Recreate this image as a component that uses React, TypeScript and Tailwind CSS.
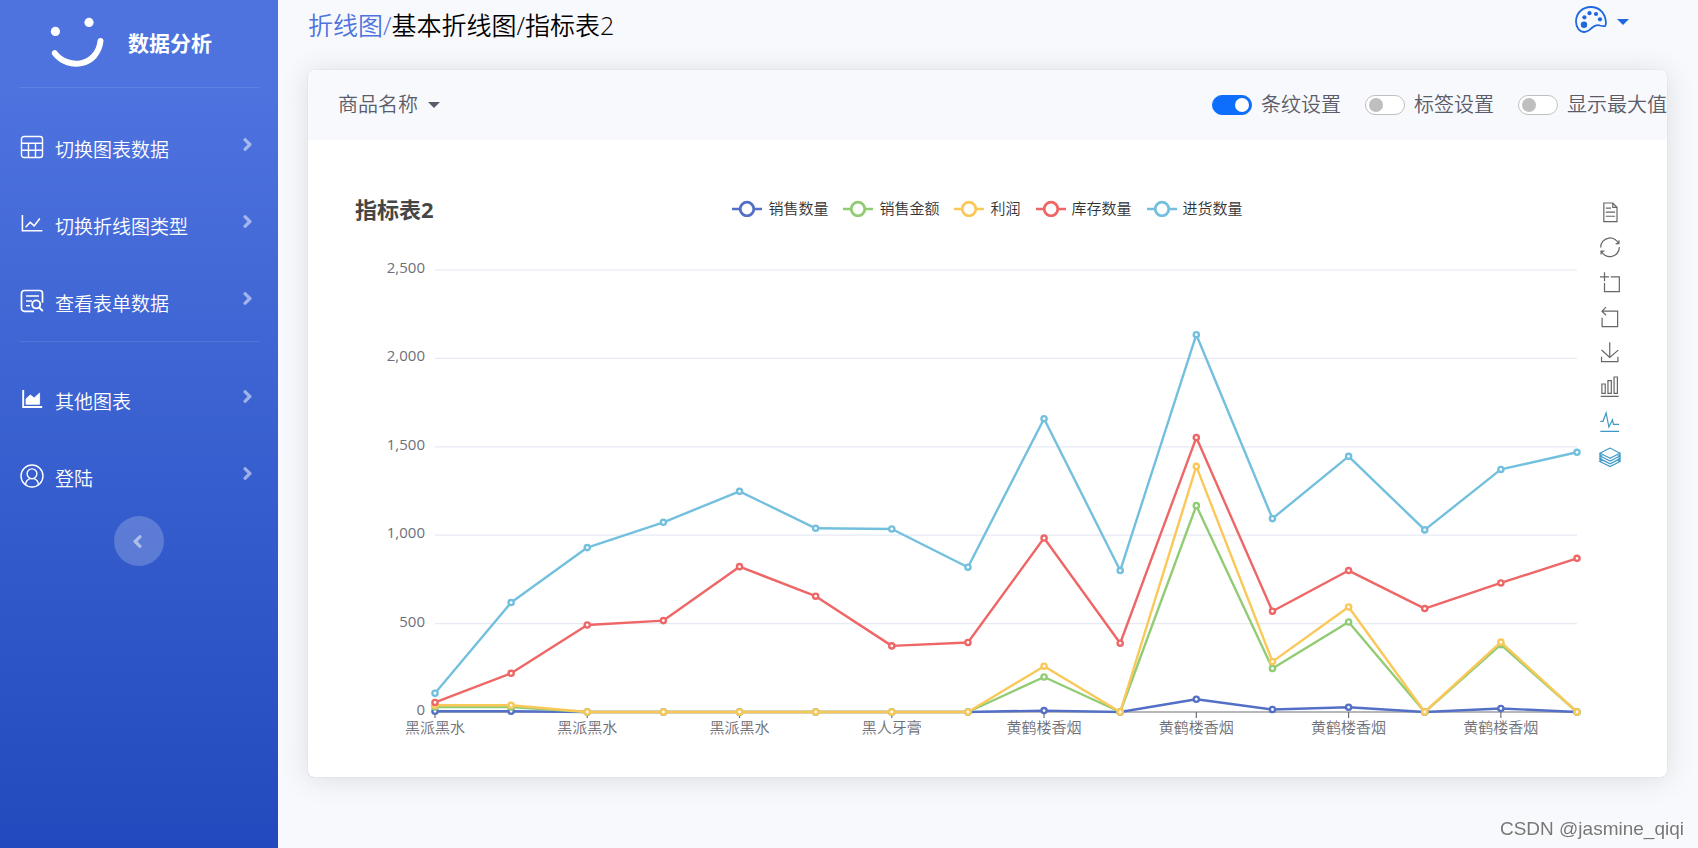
import React, { useState } from "react";
import { FaAngleLeft, FaAngleRight } from "react-icons/fa";

const series = [
  { name: "销售数量", color: "#5470c6", data: [4, 4, 0, 0, 0, 0, 0, 0, 8, 0, 72, 14, 27, 0, 20, 0] },
  { name: "销售金额", color: "#91cc75", data: [28, 28, 0, 0, 0, 0, 0, 0, 198, 0, 1167, 246, 509, 0, 381, 0] },
  { name: "利润", color: "#fac858", data: [38, 38, 0, 0, 0, 0, 0, 0, 259, 0, 1389, 285, 594, 0, 395, 0] },
  { name: "库存数量", color: "#ee6666", data: [54, 219, 492, 517, 822, 655, 374, 393, 984, 389, 1552, 570, 800, 585, 730, 869] },
  { name: "进货数量", color: "#73c0de", data: [106, 619, 930, 1073, 1248, 1039, 1035, 819, 1659, 800, 2134, 1094, 1446, 1030, 1372, 1469] },
];

const categories = ["黑派黑水", "黑派黑水", "黑派黑水", "黑人牙膏", "黄鹤楼香烟", "黄鹤楼香烟", "黄鹤楼香烟", "黄鹤楼香烟"];
const yTicks = [0, 500, 1000, 1500, 2000, 2500];

const plot = { left: 80, right: 1222, top: 15, bottom: 457, max: 2500 };
const px = (i: number) => plot.left + (i * (plot.right - plot.left)) / 15;
const py = (v: number) => plot.bottom - (v * (plot.bottom - plot.top)) / plot.max;

const tools = [
  { label: "数据视图", d: "M17.5,17.3H33 M17.5,17.3H33 M45.4,29.5h-28 M11.5,2v56H51V14.8L38.4,2H11.5z M38.4,2.2v12.7H51 M45.4,41.7h-28" },
  { label: "还原", d: "M47,18.9h9.8V8.7 M56.3,20.1 C52.1,9,40.5,0.6,26.8,2.1C12.6,3.7,1.6,16.2,2.1,30.6 M13,41.1H3.1v10.2 M3.7,39.9c4.2,11.1,15.8,19.5,29.5,18 c14.2-1.6,25.2-14.1,24.7-28.5" },
  { label: "区域缩放", d: "M0,13.5h26.9 M13.5,26.9V0 M32.1,13.5H58V58H13.5 V32.1" },
  { label: "区域缩放还原", d: "M18,-0.6L5.9,11.5l12.3,12.3 M6.3,11.5H52.9v46.6 H6.3v-27" },
  { label: "保存为图片", d: "M4.7,22.9L29.3,45.5L54.7,23.4M4.6,43.6L4.6,58L53.8,58L53.8,43.6M29.2,45.1L29.2,0" },
  { label: "切换为柱状图", d: "M5.7,20h10V48h-10V20zM23.9,10h10v38h-10V10zM42.2,-1h10v49h-10V-1zM2.1,57h53.7" },
  { label: "切换为折线图", active: true, d: "M1,27h8l9.3-25l8.4,42l10.7-21.7l3,13.8h17M1,57h56.4" },
  {
    label: "切换为堆叠",
    active: true,
    d: "M8.2,38.4l-8.4,4.1l30.6,15.3L60,42.5l-8.1-4.1l-21.5,11L8.2,38.4z M51.9,30l-8.1,4.2l-13.4,6.9l-13.9-6.9L8.2,30l-8.4,4.2l8.4,4.2l22.2,11l21.5-11l8.1-4.2L51.9,30z M51.9,21.7l-8.1,4.2L35.7,30l-5.3,2.8L24.9,30l-8.4-4.1l-8.3-4.2l-8.4,4.2L8.2,30l8.3,4.2l13.9,6.9l13.4-6.9l8.1-4.2l8.1-4.1L51.9,21.7zM30.4,2.2L-0.2,17.5l8.4,4.1l8.3,4.2l8.4,4.2l5.5,2.7l5.3-2.7l8.1-4.2l8.1-4.2l8.1-4.1L30.4,2.2z M0,17.5v25 M60,17.5v25",
  },
];

function Glyph({ children }: { children: React.ReactNode }) {
  return (
    <svg viewBox="0 0 24 24" className="mb-[3px] size-6 shrink-0" fill="none" stroke="currentColor" strokeWidth="1.4" aria-hidden="true">
      {children}
    </svg>
  );
}

const TableIcon = () => (
  <Glyph>
    <rect x="1.5" y="1.5" width="21" height="21" rx="2.5" />
    <path d="M1.5 8.2h21M1.5 15.2h21M8.5 8.2v14.3M15.5 8.2v14.3" />
  </Glyph>
);

const LineIcon = () => (
  <Glyph>
    <path d="M2.4 3v15.8h20" strokeWidth="1.6" />
    <path d="M5.6 15.2l4.6-4.9 4 3.6 5.6-7.4" strokeWidth="1.6" />
  </Glyph>
);

const SearchFormIcon = () => (
  <Glyph>
    <path d="M14 22.3H4.3a2.8 2.8 0 0 1-2.8-2.8V4.3a2.8 2.8 0 0 1 2.8-2.8h15.4a2.8 2.8 0 0 1 2.8 2.8v9.5" strokeWidth="1.7" />
    <path d="M6 7h13M6 12h6M6 16.8h4" strokeWidth="1.6" />
    <circle cx="16.2" cy="15.4" r="4" strokeWidth="1.9" />
    <path d="M19.2 18.4l3.6 3.8" strokeWidth="1.9" />
  </Glyph>
);

const AreaIcon = () => (
  <Glyph>
    <path d="M3.2 3v17h19" strokeWidth="1.9" />
    <path d="M6 17.3v-5.4l4.2-4 4 3 5.4-4.8v11.200z" fill="currentColor" stroke="currentColor" strokeWidth="0.8" />
  </Glyph>
);

const UserIcon = () => (
  <Glyph>
    <circle cx="12" cy="12" r="11" />
    <circle cx="12" cy="9.8" r="4.9" />
    <path d="M5.4 20.6c.6-3.4 2.6-5.6 5-6M18.6 20.6c-.6-3.4-2.6-5.6-5-6" />
  </Glyph>
);

const navGroups = [
  [
    { label: "切换图表数据", icon: <TableIcon /> },
    { label: "切换折线图类型", icon: <LineIcon /> },
    { label: "查看表单数据", icon: <SearchFormIcon /> },
  ],
  [
    { label: "其他图表", icon: <AreaIcon /> },
    { label: "登陆", icon: <UserIcon /> },
  ],
];

function NavList({ items }: { items: (typeof navGroups)[number] }) {
  return (
    <ul>
      {items.map((item) => (
        <li key={item.label}>
          <a href="#" className="flex h-[77px] items-center pr-5 pl-5">
            {item.icon}
            <span className="ml-[11px] flex-1 pt-[3px] text-[19px] leading-7">{item.label}</span>
            <FaAngleRight className="mb-2 size-[21px] text-white/50" aria-hidden="true" />
          </a>
        </li>
      ))}
    </ul>
  );
}

function Sidebar() {
  return (
    <aside className="w-[278px] shrink-0 bg-linear-to-b from-[#4e73df] from-10% to-[#224abe] text-white">
      <div className="flex h-[87px] items-center pb-1 pl-[50px]">
        <svg viewBox="0 0 54 50" className="h-[50px] w-[54px]" aria-hidden="true">
          <circle cx="5.4" cy="14.4" r="4.6" fill="#fff" />
          <circle cx="39" cy="5.4" r="4.6" fill="#fff" />
          <path d="M4.8 36.2C18 53.5 47.5 49.5 50.5 24" fill="none" stroke="#fff" strokeWidth="6" strokeLinecap="round" />
        </svg>
        <span className="ml-6 pt-[2px] text-[21px] leading-8 font-bold">数据分析</span>
      </div>
      <hr className="mx-[19px] border-white/10" />
      <nav className="pt-[22px]">
        <NavList items={navGroups[0]} />
        <hr className="mx-[19px] mb-5 border-white/10" />
        <NavList items={navGroups[1]} />
      </nav>
      <button aria-label="收起侧边栏" className="mx-auto flex size-[50px] items-center justify-center rounded-full bg-white/20 text-white/50">
        <FaAngleLeft className="mr-[3px] size-[21px]" aria-hidden="true" />
      </button>
    </aside>
  );
}

function Caret() {
  return (
    <svg viewBox="0 0 12 6" className="h-[6px] w-3" fill="currentColor" aria-hidden="true">
      <path d="M0 0h12L6 6z" />
    </svg>
  );
}

function PaletteIcon() {
  return (
    <svg viewBox="0 0 32 27" className="h-[27px] w-8" fill="none" stroke="currentColor" strokeWidth="1.8" strokeLinejoin="round" aria-hidden="true">
      <path d="M16 1C7 1 1 7.5 1 15.5C1 21.5 4.5 26 9.3 26C12.8 26 14.5 24.2 16.7 22C19.5 19.3 22 18.5 25 19.5C27.5 20.2 29.3 20.5 30.2 19.8C31 19 31 16.5 30.7 14.5C29.5 6.5 24 1 16 1Z" />
      <g fill="currentColor" stroke="none">
        <circle cx="9" cy="18.8" r="3.2" />
        <circle cx="9.4" cy="11.3" r="2.1" />
        <circle cx="14.5" cy="7.2" r="2.1" />
        <circle cx="21" cy="8" r="2.1" />
        <circle cx="25" cy="13.3" r="2.1" />
      </g>
    </svg>
  );
}

function Toggle({ id, label, initial = false }: { id: string; label: string; initial?: boolean }) {
  const [on, setOn] = useState(initial);
  return (
    <div className="flex shrink-0 items-center gap-[9px]">
      <input
        id={id}
        type="checkbox"
        role="switch"
        checked={on}
        onChange={(e) => setOn(e.target.checked)}
        className="flex h-5 w-10 appearance-none items-center rounded-full border border-[#bfbfbf] bg-white px-[3px] before:size-[14px] before:rounded-full before:bg-[#bfbfbf] checked:justify-end checked:border-[#0d6efd] checked:bg-[#0d6efd] checked:px-[2px] checked:before:bg-white"
      />
      <label htmlFor={id} className="text-xl whitespace-nowrap">
        {label}
      </label>
    </div>
  );
}

function Chart() {
  return (
    <svg viewBox="0 0 1225 490" className="h-auto w-full overflow-visible" role="img" aria-label="指标表2">
      {yTicks.map((t) => (
        <g key={t}>
          {t > 0 && <line x1={plot.left} x2={plot.right} y1={py(t)} y2={py(t)} stroke="#e6eaf3" strokeWidth="1.2" />}
          <text x="70" y={py(t) + 3} textAnchor="end" fontSize="15" fill="#6e7079" className="font-normal">
            {t.toLocaleString("en-US")}
          </text>
        </g>
      ))}
      <line x1={plot.left} x2={plot.right} y1={plot.bottom} y2={plot.bottom} stroke="#6e7079" strokeWidth="1.2" />
      {categories.map((c, i) => (
        <g key={i}>
          <line x1={px(i * 2)} x2={px(i * 2)} y1={plot.bottom} y2={plot.bottom + 6} stroke="#6e7079" strokeWidth="1.2" />
          <text x={px(i * 2)} y="478" textAnchor="middle" fontSize="15" fill="#6e7079">
            {c}
          </text>
        </g>
      ))}
      {series.map((s) => (
        <g key={s.name} stroke={s.color} strokeWidth="2.4">
          <polyline points={s.data.map((v, i) => `${px(i)},${py(v)}`).join(" ")} fill="none" strokeLinejoin="bevel" />
          {s.data.map((v, i) => (
            <circle key={i} cx={px(i)} cy={py(v)} r="2.6" fill="#fff" strokeWidth="2.4" />
          ))}
        </g>
      ))}
    </svg>
  );
}

export default function App() {
  return (
    <div className="flex min-h-screen bg-[#f8f9fc] font-['Open_Sans','Noto_Sans_CJK_SC',sans-serif] font-[350] text-[#5a5c69]">
      <Sidebar />
      <main className="min-w-0 flex-1 pr-[31px] pl-[30px]">
        <header className="flex h-[70px] items-start justify-between">
          <h1 className="pt-[7px] text-[25px] leading-9 font-[350] text-black">
            <a href="#" className="text-[#4e73df]">折线图/</a>基本折线图/指标表2
          </h1>
          <button aria-label="主题颜色" className="mt-[6px] mr-[38px] flex items-center gap-[10px] text-[#1f68e0]">
            <PaletteIcon />
            <span className="pt-1"><Caret /></span>
          </button>
        </header>

        <section className="overflow-hidden rounded-md bg-white shadow-[0_2px_28px_0_rgba(58,59,69,0.15),0_0_1px_0_rgba(58,59,69,0.3)]">
          <div className="flex h-[70px] items-center justify-between bg-[#f8f9fc] pl-[30px]">
            <div className="flex items-center gap-[10px]">
              <select aria-label="商品名称" className="appearance-none bg-transparent text-xl font-[350] text-[#5a5c69]">
                <option>商品名称</option>
              </select>
              <Caret />
            </div>
            <div className="flex gap-6">
              <Toggle id="stripe" label="条纹设置" initial />
              <Toggle id="tags" label="标签设置" />
              <Toggle id="maximum" label="显示最大值" />
            </div>
          </div>

          <div className="grid grid-cols-[1fr_20px] grid-rows-[58px_auto] gap-x-5 px-[47px] pt-[57px] pb-8">
            <div className="col-span-2 col-start-1 row-start-1 grid grid-cols-[1fr_auto_1fr] items-start">
              <h2 className="text-[22px] leading-6 font-bold text-[#464646]">指标表2</h2>
              <ul className="flex gap-[15px] text-[15px] leading-[22px] text-[#333]">
                {series.map((s) => (
                  <li key={s.name} className="flex items-center gap-[6px]">
                    <svg viewBox="0 0 30 18" className="h-[18px] w-[30px]" fill="none" stroke={s.color} strokeWidth="2.4" aria-hidden="true">
                      <path d="M0 10h30" />
                      <circle cx="15" cy="10" r="6.8" fill="#fff" strokeWidth="2.8" />
                    </svg>
                    {s.name}
                  </li>
                ))}
              </ul>
            </div>
            <div className="col-start-1 row-start-2">
              <Chart />
            </div>
            <div className="col-start-2 row-span-2 row-start-1 flex flex-col gap-[15px] pt-[5px]">
              {tools.map((t) => (
                <button key={t.label} aria-label={t.label} className="size-5">
                  <svg viewBox="0 -1 60 60" className="size-5 overflow-visible" fill="none" stroke={t.active ? "#3e98c5" : "#666"} strokeWidth="3.6" aria-hidden="true">
                    <path d={t.d} />
                  </svg>
                </button>
              ))}
            </div>
          </div>
        </section>
      </main>
      <div className="fixed right-[14px] bottom-[7px] font-['Liberation_Sans',sans-serif] text-[19px] leading-6 text-[#777] [text-shadow:1px_1px_0_#fff]">CSDN @jasmine_qiqi</div>
    </div>
  );
}
